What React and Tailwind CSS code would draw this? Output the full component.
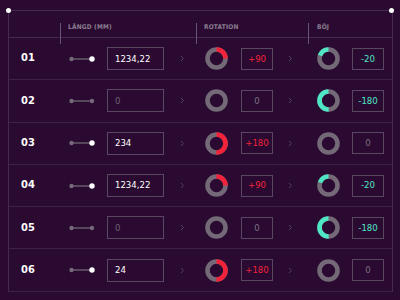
import React from 'react';

const rows = [
  { id: '01', on: true, len: '1234,22', rot: 90, rotLabel: '+90', boj: -20, bojLabel: '-20' },
  { id: '02', on: false, len: '0', rot: 0, rotLabel: '0', boj: -180, bojLabel: '-180' },
  { id: '03', on: true, len: '234', rot: 180, rotLabel: '+180', boj: 0, bojLabel: '0' },
  { id: '04', on: true, len: '1234,22', rot: 90, rotLabel: '+90', boj: -20, bojLabel: '-20' },
  { id: '05', on: false, len: '0', rot: 0, rotLabel: '0', boj: -180, bojLabel: '-180' },
  { id: '06', on: true, len: '24', rot: 180, rotLabel: '+180', boj: 0, bojLabel: '0' },
];

function Ring({ deg, color }) {
  const r = 9;
  const c = 2 * Math.PI * r;
  const len = (Math.abs(deg === -20 ? 70 : deg) / 360) * c;
  const mirror = deg < 0;
  return (
    <svg width="23" height="23" viewBox="0 0 23 23" className="shrink-0">
      <circle cx="11.5" cy="11.5" r={r} fill="none" stroke="#736977" strokeWidth="4.6" />
      {deg !== 0 && (
        <circle
          cx="11.5"
          cy="11.5"
          r={r}
          fill="none"
          stroke={color}
          strokeWidth="4.6"
          strokeDasharray={`${len} 100`}
          transform={mirror ? 'translate(23 0) scale(-1 1) rotate(-90 11.5 11.5)' : 'rotate(-90 11.5 11.5)'}
        />
      )}
    </svg>
  );
}

function Slider({ on }) {
  return (
    <svg width="26" height="8" viewBox="0 0 26 8" className="shrink-0">
      <line x1="2" y1="4" x2="23" y2="4" stroke="#6d6172" strokeWidth="1.4" />
      <circle cx="2.5" cy="4" r="2.2" fill="#75697a" />
      <circle cx="23" cy="4" r={on ? 2.7 : 2.2} fill={on ? '#ffffff' : '#75697a'} />
    </svg>
  );
}

function Chevron() {
  return (
    <svg width="5" height="7" viewBox="0 0 5 7">
      <path d="M1 1l2.5 2.5L1 6" fill="none" stroke="#54405b" strokeWidth="1" />
    </svg>
  );
}

function ValueBox({ text, color }) {
  const muted = text === '0';
  return (
    <div
      className={`ml-[13px] w-[32px] h-[22px] border border-[#5a4860] flex items-center justify-center text-[9.5px] shrink-0 ${muted ? 'text-[#7d7080]' : color}`}
    >
      {text}
    </div>
  );
}

export default function App() {
  return (
    <div className="w-[400px] h-[300px] bg-[#2a0a31] overflow-hidden relative font-['DejaVu_Sans_Condensed','DejaVu_Sans',sans-serif] font-stretch-condensed">
      {/* corner dots */}
      <div className="absolute left-[5.5px] top-[7.5px] w-[5px] h-[5px] rounded-full bg-white" />
      <div className="absolute left-[389px] top-[7.5px] w-[5px] h-[5px] rounded-full bg-white" />

      <div className="ml-[8px] mt-[10px] w-[385px] border-l border-t border-r border-[#46294f]">
        {/* header */}
        <div className="h-[27px] flex items-start border-b border-[#46294f] text-[6.5px] font-bold tracking-[0.2px] text-[#8b7d90] uppercase">
          <div className="w-[51px]" />
          <div className="w-px h-[21px] mt-[12px] bg-[#6a5570]" />
          <div className="w-[135px] pl-[7px] pt-[12px]">Längd (mm)</div>
          <div className="w-px h-[21px] mt-[12px] bg-[#6a5570]" />
          <div className="w-[111px] pl-[7px] pt-[12px]">Rotation</div>
          <div className="w-px h-[21px] mt-[12px] bg-[#6a5570]" />
          <div className="pl-[8px] pt-[12px]">Böj</div>
        </div>

        {rows.map(row => (
          <div key={row.id} className="h-[42.3px] flex items-center border-b border-[#3c2243]">
            <div className="w-[51px] pl-[12px] text-[11px] font-bold text-white">{row.id}</div>
            <div className="ml-[9px]"><Slider on={row.on} /></div>
            <div
              className={`ml-[12px] w-[57px] h-[23px] border border-[#5a4860] flex items-center pl-[7px] text-[9.5px] shrink-0 ${row.len === '0' ? 'text-[#6e6272]' : 'text-white'}`}
            >
              {row.len}
            </div>
            <div className="w-[33px] flex justify-center pl-[3px]"><Chevron /></div>
            <div className="ml-[8px]"><Ring deg={row.rot} color="#f42339" /></div>
            <ValueBox text={row.rotLabel} color="text-[#f42339]" />
            <div className="w-[34px] flex justify-center"><Chevron /></div>
            <div className="ml-[10px]"><Ring deg={row.boj} color="#4fe6c6" /></div>
            <div className="-ml-[1px]"><ValueBox text={row.bojLabel} color="text-[#4fe6c6]" /></div>
          </div>
        ))}
      </div>
    </div>
  );
}
